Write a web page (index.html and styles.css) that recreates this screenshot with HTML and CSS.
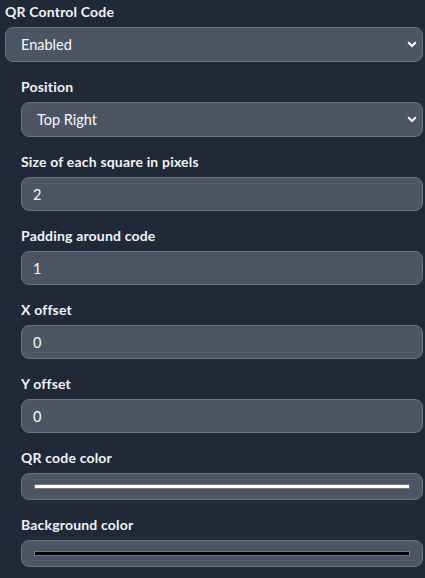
FILE: index.html
```html
<!DOCTYPE html>
<html>
<head>
<meta charset="utf-8">
<link rel="stylesheet" href="styles.css">
</head>
<body>
<div class="panel">
  <div class="field">
    <label class="label">QR Control Code</label>
    <div class="select-wrap">
      <select class="control select"><option>Enabled</option></select>
      <svg class="chev" width="10" height="7" viewBox="0 0 10 7"><path d="M1.2 1.2 L5 5 L8.8 1.2" fill="none" stroke="#fff" stroke-width="2"/></svg>
    </div>
  </div>
  <div class="nested">
    <div class="field">
      <label class="label">Position</label>
      <div class="select-wrap">
        <select class="control select"><option>Top Right</option></select>
        <svg class="chev" width="10" height="7" viewBox="0 0 10 7"><path d="M1.2 1.2 L5 5 L8.8 1.2" fill="none" stroke="#fff" stroke-width="2"/></svg>
      </div>
    </div>
    <div class="field">
      <label class="label">Size of each square in pixels</label>
      <input class="control input" value="2">
    </div>
    <div class="field">
      <label class="label">Padding around code</label>
      <input class="control input" value="1">
    </div>
    <div class="field">
      <label class="label">X offset</label>
      <input class="control input" value="0">
    </div>
    <div class="field">
      <label class="label">Y offset</label>
      <input class="control input" value="0">
    </div>
    <div class="field">
      <label class="label">QR code color</label>
      <div class="control color"><span class="swatch white"></span></div>
    </div>
    <div class="field">
      <label class="label">Background color</label>
      <div class="control color"><span class="swatch black"></span></div>
    </div>
  </div>
</div>
</body>
</html>
```
FILE: styles.css
```css
html, body {
  margin: 0;
  padding: 0;
  background: #1f2937;
}
body {
  font-family: Lato, "Noto Sans", sans-serif;
  color: #f9fafb;
}
.panel {
  padding: 2px 2px 0 5px;
  display: flex;
  flex-direction: column;
}
.nested {
  padding-left: 16px;
  display: flex;
  flex-direction: column;
}
.field {
  display: flex;
  flex-direction: column;
  margin-bottom: 15px;
}
.label {
  font-size: 14px;
  line-height: 20px;
  font-weight: 700;
  letter-spacing: 0.18px;
  margin-bottom: 5px;
  color: #f3f4f6;
}
.control {
  box-sizing: border-box;
  width: 100%;
  background: #4b5563;
  border: 1px solid #6b7280;
  border-radius: 8px;
  color: #f9fafb;
  font-family: Lato, "Noto Sans", sans-serif;
  font-size: 14.5px;
  margin: 0;
  outline: none;
}
.select-wrap {
  position: relative;
}
.select {
  appearance: none;
  -webkit-appearance: none;
  height: 35px;
  padding: 0 30px 0 15px;
  display: block;
}
.chev {
  position: absolute;
  right: 6px;
  top: 14px;
}
.input {
  height: 34px;
  padding: 0 11px;
  display: block;
}
.color {
  height: 27px;
  padding: 0 12px;
  display: flex;
  align-items: center;
}
.swatch {
  display: block;
  flex: 1;
  height: 5px;
  box-sizing: border-box;
  border: 1px solid #777;
}
.swatch.white { background: #ffffff; }
.swatch.black { background: #000000; }
```
